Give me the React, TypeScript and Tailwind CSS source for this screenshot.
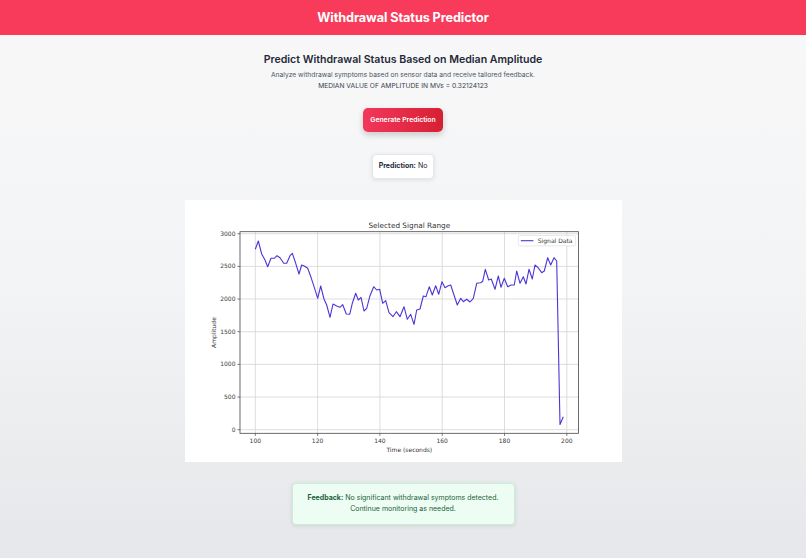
import React from "react";

const pts: [number, number][] = [
  [255.3, 249.3], [258.3, 241], [261.7, 254], [265, 260], [267.7, 266.7], [271, 258.3], [274.3, 258.3],
  [277, 255.7], [280, 257.7], [283.7, 263.3], [286.7, 263.3], [290, 255.7], [292.3, 253.3], [295.7, 263.3],
  [299, 274], [301.7, 265], [304.3, 266], [307.7, 268.3], [311, 277.3], [314.3, 287.3], [317.7, 298.3],
  [320.7, 286], [324, 299], [326.7, 305], [330, 317.3], [333, 304], [336.7, 306], [340, 307.3], [342.7, 304.7],
  [346.3, 314], [349.7, 314.3], [352.3, 303.3], [355.7, 293.3], [358.3, 300], [361, 297.3], [364, 311],
  [366.7, 308.3], [370, 295.7], [373.7, 286.7], [376.7, 290], [379.7, 289.3], [382.7, 303.3], [385.7, 300.7],
  [389, 312.7], [393, 316.7], [396.3, 311.7], [400, 316.7], [404, 306.7], [407.3, 319.3], [410.7, 314.3],
  [414, 324.3], [416.7, 310], [420, 309], [423.3, 296], [426, 296.7], [429.3, 286.7], [432.3, 295],
  [435.7, 285.7], [438.7, 294.3], [442, 281.7], [445, 287.7], [447.8, 286], [450.7, 285], [454, 295],
  [457.3, 305], [460.7, 298.3], [463.3, 301.7], [466.7, 299.3], [470, 302], [473.3, 298.3], [476.7, 283.3],
  [480.7, 282.7], [482.7, 281.3], [485.3, 269.3], [488.7, 280], [491.3, 279], [495, 289.3], [498.3, 276],
  [501, 287.3], [504.3, 278.3], [507.7, 286.7], [511, 285], [514.3, 285], [516.7, 271], [520, 283.3],
  [523.3, 276.7], [526, 284], [529, 269.3], [532.3, 279], [535, 265], [538, 267.7], [541.7, 272.7],
  [544.3, 271], [547.7, 257.7], [550.7, 265], [554, 257.7], [556.7, 261], [560, 424.5], [563.3, 416.7],
];

const AX = { l: 240, r: 578.5, t: 231.7, b: 433.3 };
const xTicks = [100, 120, 140, 160, 180, 200];
const yTicks = [0, 500, 1000, 1500, 2000, 2500, 3000];
const X = (t: number) => 255.3 + (t - 100) * 3.115;
const Y = (v: number) => 429.7 - v * 0.06533;

function Chart() {
  const font = "'DejaVu Sans', sans-serif";
  return (
    <svg width={437} height={262} viewBox="185 200 437 262" className="block">
      <rect x={185} y={200} width={437} height={262} fill="#ffffff" />
      {xTicks.map((t) => (
        <line key={"gx" + t} x1={X(t)} x2={X(t)} y1={AX.t} y2={AX.b} stroke="#d4d4d4" strokeWidth={0.8} />
      ))}
      {yTicks.map((v) => (
        <line key={"gy" + v} x1={AX.l} x2={AX.r} y1={Y(v)} y2={Y(v)} stroke="#d4d4d4" strokeWidth={0.8} />
      ))}
      <polyline
        points={pts.map((p) => p.join(",")).join(" ")}
        fill="none"
        stroke="#4a36d6"
        strokeWidth={1.1}
        strokeLinejoin="round"
      />
      <rect x={AX.l} y={AX.t} width={AX.r - AX.l} height={AX.b - AX.t} fill="none" stroke="#474747" strokeWidth={0.8} />
      {xTicks.map((t) => (
        <g key={"tx" + t}>
          <line x1={X(t)} x2={X(t)} y1={AX.b} y2={AX.b + 2.6} stroke="#474747" strokeWidth={0.7} />
          <text x={X(t)} y={443} fontSize={6} fill="#3a3a3a" textAnchor="middle" fontFamily={font}>
            {t}
          </text>
        </g>
      ))}
      {yTicks.map((v) => (
        <g key={"ty" + v}>
          <line x1={AX.l - 2.6} x2={AX.l} y1={Y(v)} y2={Y(v)} stroke="#474747" strokeWidth={0.7} />
          <text x={235.5} y={Y(v) + 2.1} fontSize={6} fill="#3a3a3a" textAnchor="end" fontFamily={font}>
            {v}
          </text>
        </g>
      ))}
      <text x={409.3} y={227.8} fontSize={7.3} fill="#333" textAnchor="middle" fontFamily={font}>
        Selected Signal Range
      </text>
      <text x={409.3} y={451.5} fontSize={6} fill="#333" textAnchor="middle" fontFamily={font}>
        Time (seconds)
      </text>
      <text
        x={0}
        y={0}
        fontSize={6}
        fill="#333"
        textAnchor="middle"
        fontFamily={font}
        transform="translate(216.3 332.5) rotate(-90)"
      >
        Amplitude
      </text>
      <rect x={518.3} y={235.5} width={57.4} height={10.4} rx={1.5} fill="#fff" fillOpacity={0.85} stroke="#d8d8d8" strokeWidth={0.6} />
      <line x1={520.8} x2={533.4} y1={240.7} y2={240.7} stroke="#4a36d6" strokeWidth={1.1} />
      <text x={537.8} y={242.8} fontSize={6} fill="#333" fontFamily={font}>
        Signal Data
      </text>
    </svg>
  );
}

export default function App() {
  return (
    <div
      className="min-h-[558px] w-full bg-gradient-to-b from-[#f8f8f9] via-[#f3f4f5] to-[#e6e7ea] text-[#1f2937]"
      style={{ fontFamily: "Inter, 'Noto Sans', sans-serif" }}
    >
      <header className="flex h-[35px] items-center justify-center bg-[#f83b5a]">
        <h1 className="text-[12.7px] font-bold tracking-[-0.1px] text-white">Withdrawal Status Predictor</h1>
      </header>
      <main className="flex flex-col items-center">
        <h2 className="mt-[18px] text-[10.6px] font-semibold leading-[14px] text-[#1f2937]">
          Predict Withdrawal Status Based on Median Amplitude
        </h2>
        <p className="mt-[2.6px] text-[6.7px] leading-[11.4px] text-[#4b5563]">
          Analyze withdrawal symptoms based on sensor data and receive tailored feedback.
        </p>
        <p className="text-[6.7px] leading-[11.4px] text-[#374151]">MEDIAN VALUE OF AMPLITUDE IN MVs = 0.32124123</p>
        <button className="mt-[16px] flex h-[24px] w-[80px] items-center justify-center rounded-[5px] bg-gradient-to-r from-[#f2375b] to-[#d71f33] text-[6.8px] font-semibold text-white shadow-[0_3px_6px_rgba(0,0,0,0.18)]">
          Generate Prediction
        </button>
        <div className="mt-[21.6px] flex h-[25px] w-[62px] items-center justify-center rounded-[4px] border border-[#e5e7eb] bg-white text-[7px] text-[#1f2937] shadow-[0_1px_4px_rgba(0,0,0,0.1)]">
          <span className="font-bold">Prediction:</span>
          <span className="ml-[2px]">No</span>
        </div>
        <div className="mt-[20.7px]">
          <Chart />
        </div>
        <div className="mt-[21.3px] flex h-[42px] w-[223px] flex-col items-center justify-center rounded-[4px] border border-[#c6f0d5] bg-[#edfdf3] text-center text-[7px] leading-[10.7px] text-[#1c5f3a] shadow-[0_1px_4px_rgba(0,0,0,0.1)]">
          <p>
            <span className="font-bold">Feedback:</span> No significant withdrawal symptoms detected.
          </p>
          <p>Continue monitoring as needed.</p>
        </div>
      </main>
    </div>
  );
}
